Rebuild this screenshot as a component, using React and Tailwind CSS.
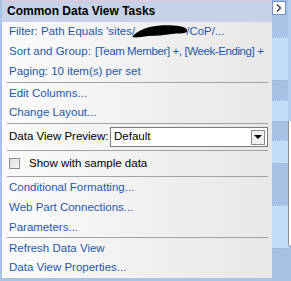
import React from 'react';

const links1 = ['Edit Columns...', 'Change Layout...'];
const links2 = ['Conditional Formatting...', 'Web Part Connections...', 'Parameters...'];
const links3 = ['Refresh Data View', 'Data View Properties...'];

// right-hand strip bands (height, colour)
const bands = [
  [37, '#a9c3e4'],
  [43, '#c3dcfa'],
  [20, '#a7c1e3'],
  [21, '#c3dcfa'],
  [19, '#a7c1e3'],
  [23, '#c3dcfa'],
  [42, '#a7c1e3'],
  [43, '#c3dcfa'],
  [33, '#a7c1e3'],
];

function Sep() {
  return <div className="h-px bg-[#a3a3a3] ml-[5px] mr-[4px]" />;
}

function Link({ children }) {
  return (
    <div className="h-[20px] flex items-center pl-[7px] text-[#1f58a8] whitespace-nowrap">{children}</div>
  );
}

function Blob() {
  return (
    <svg width="56" height="13" viewBox="0 0 56 13" className="-ml-[3px] -mr-[2px] shrink-0">
      <path
        d="M0 12 C4 7 10 4 18 2 C26 0 38 0 47 1 C53 2 56 4 55 7 C52 9 46 8 40 9 C32 10 24 11 16 11 C9 12 4 13 0 12 Z"
        fill="#000"
      />
    </svg>
  );
}

export default function App() {
  return (
    <div className="w-[291px] h-[281px] bg-[#a9c3e4] flex pl-[2px] font-['Liberation_Sans',Arial,sans-serif] text-[11.5px] leading-none overflow-hidden">
      {/* Task panel */}
      <div className="w-[270px] h-[278px] shrink-0 flex flex-col border-t border-[#e9c6de] bg-linear-to-r from-[#fbfbfb] to-[#e7e7e7]">
        <div className="h-[21px] flex items-center pl-[5px] bg-[#c5d2e8] font-bold text-black text-[12px]">
          Common Data View Tasks
        </div>

        <Link>
          <span>Filter: Path Equals 'sites/</span>
          <Blob />
          <span>/CoP/...</span>
        </Link>
        <Link>
          <span className="w-[86px] shrink-0">Sort and Group:</span>
          <span className="tracking-[-0.4px]">[Team Member] +, [Week-Ending] +</span>
        </Link>
        <Link>Paging: 10 item(s) per set</Link>
        <div className="h-px" />
        <Sep />
        {links1.map((t) => (
          <Link key={t}>{t}</Link>
        ))}
        <Sep />

        <div className="h-[26px] flex items-center pl-[7px] text-black whitespace-nowrap">
          <span className="w-[101px] shrink-0">Data View Preview:</span>
          <div className="w-[158px] h-[20px] shrink-0 bg-white border border-[#7a7a7a] flex items-center justify-between pl-[3px] pr-[2px]">
            <span>Default</span>
            <div className="w-[14px] h-[15px] border border-[#8a8a8a] bg-[#f0f0f0] flex items-center justify-center">
              <div className="w-0 h-0 border-l-[4px] border-r-[4px] border-t-[4px] border-l-transparent border-r-transparent border-t-black" />
            </div>
          </div>
        </div>
        <Sep />

        <div className="h-[25px] flex items-center pl-[7px] text-black whitespace-nowrap">
          <div className="w-[11px] h-[11px] border border-[#8e8f8f] bg-linear-to-br from-[#dcdcdc] to-[#f7f7f7]" />
          <span className="ml-[9px]">Show with sample data</span>
        </div>
        <Sep />

        <div className="h-px" />
        {links2.map((t) => (
          <Link key={t}>{t}</Link>
        ))}
        <Sep />
        {links3.map((t) => (
          <Link key={t}>{t}</Link>
        ))}
      </div>

      {/* Right strip */}
      <div className="w-[19px] shrink-0 flex flex-col">
        <div className="relative">
          <div className="flex flex-row">
            <div className="w-[16px] flex flex-col">
              {bands.map(([h, c], i) => (
                <div key={i} className="border-t border-dotted border-[#9fb8d9]" style={{ height: h, background: c }} />
              ))}
            </div>
            <div className="w-[3px] flex flex-col">
              <div className="h-[121px] bg-[#b4cdee]" />
              <div className="h-[124px] bg-white border-l border-[#8c8c8c]" />
              <div className="h-[36px] bg-[#a7c1e3]" />
            </div>
          </div>
          <div className="absolute left-0 top-[1px] w-[14px] h-[14px] bg-white border border-[#6f90c9] flex items-center justify-center">
            <svg width="6" height="8" viewBox="0 0 6 8">
              <path d="M1 0.5 L4.5 4 L1 7.5" fill="none" stroke="#333" strokeWidth="1.3" />
            </svg>
          </div>
        </div>
      </div>
    </div>
  );
}
